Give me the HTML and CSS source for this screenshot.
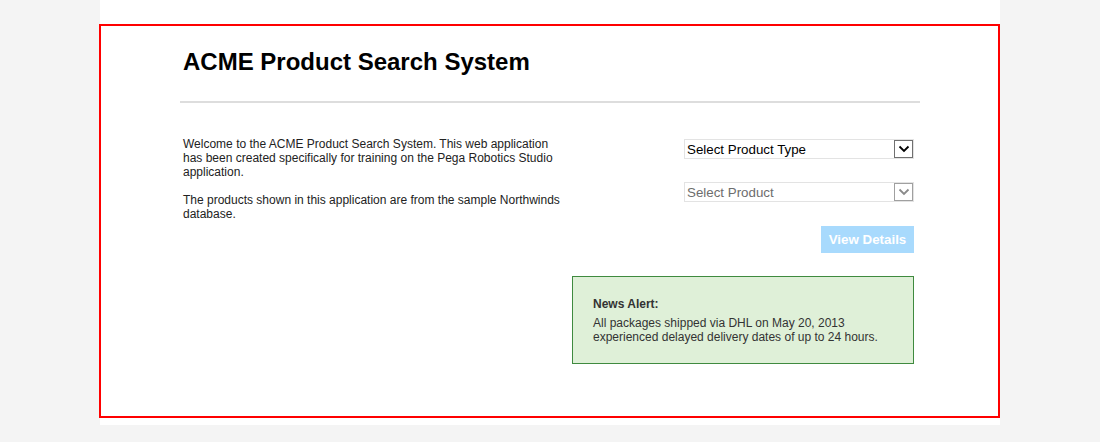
FILE: index.html
```html
<!DOCTYPE html>
<html>
<head>
<meta charset="utf-8">
<link rel="stylesheet" href="styles.css">
</head>
<body>
<div class="page">
  <div class="frame">
    <div class="inner">
      <h1 class="title">ACME Product Search System</h1>
      <div class="rule"></div>
      <div class="content">
        <div class="intro">
          <p>Welcome to the ACME Product Search System. This web application has been created specifically for training on the Pega Robotics Studio application.</p>
          <p>The products shown in this application are from the sample Northwinds database.</p>
        </div>
        <div class="controls">
          <div class="select first">
            <span class="select-text">Select Product Type</span>
            <span class="arrow"><svg width="12" height="8" viewBox="0 0 12 8"><path d="M1.5 1.5 L6 6 L10.5 1.5" fill="none" stroke="#000" stroke-width="1.8"/></svg></span>
          </div>
          <div class="select disabled">
            <span class="select-text">Select Product</span>
            <span class="arrow"><svg width="12" height="8" viewBox="0 0 12 8"><path d="M1.5 1.5 L6 6 L10.5 1.5" fill="none" stroke="#8a8a8a" stroke-width="1.8"/></svg></span>
          </div>
          <div class="button">View Details</div>
          <div class="alert">
            <div class="alert-title">News Alert:</div>
            <div class="alert-text">All packages shipped via DHL on May 20, 2013<br>experienced delayed delivery dates of up to 24 hours.</div>
          </div>
        </div>
      </div>
    </div>
  </div>
</div>
</body>
</html>
```
FILE: styles.css
```css
html, body {
  margin: 0;
  padding: 0;
}
body {
  background: #f4f4f4;
  font-family: "Liberation Sans", Arial, sans-serif;
}
.page {
  width: 900px;
  margin: 0 auto;
  background: #fff;
  padding: 24px 0 7px;
}
.frame {
  margin-left: -1px;
  border: 2px solid #ff0000;
  height: 390px;
}
.inner {
  margin-left: 79px;
  width: 740px;
}
.title {
  margin: 0;
  padding: 22px 0 0 3px;
  font-size: 24px;
  font-weight: bold;
  line-height: 28px;
  color: #000;
}
.rule {
  margin-top: 25px;
  height: 2px;
  background: #dddddd;
}
.content {
  display: flex;
  justify-content: space-between;
  padding: 36px 6px 0 3px;
}
.intro {
  width: 384px;
  margin-top: -2px;
  font-size: 12px;
  line-height: 14px;
  color: #222;
}
.intro p {
  margin: 0 0 14px;
}
.controls {
  width: 342px;
  display: flex;
  flex-direction: column;
  align-items: flex-end;
}
.select {
  width: 228px;
  height: 18px;
  border: 1px solid #e3e3e3;
  display: flex;
  align-items: center;
  justify-content: space-between;
  font-size: 13.333px;
  color: #000;
  margin-bottom: 24px;
}
.select.first {
  margin-bottom: 23px;
}
.select-text {
  padding-left: 2px;
}
.select.disabled {
  color: #6d6d6d;
}
.arrow {
  width: 17px;
  height: 16px;
  border: 1px solid #707070;
  display: flex;
  align-items: center;
  justify-content: center;
  background: #fff;
}
.disabled .arrow {
  border-color: #a0a0a0;
}
.button {
  width: 93px;
  height: 27px;
  line-height: 27px;
  text-align: center;
  background: #a8dafd;
  color: #fff;
  font-weight: bold;
  font-size: 13.333px;
  margin-bottom: 23px;
}
.alert {
  box-sizing: border-box;
  width: 342px;
  height: 88px;
  background: #dff0d8;
  border: 1px solid #3f8a3f;
  padding: 20px 20px 0;
  font-size: 12px;
  line-height: 14px;
  color: #333;
}
.alert-title {
  font-weight: bold;
  margin-bottom: 5px;
}
```
